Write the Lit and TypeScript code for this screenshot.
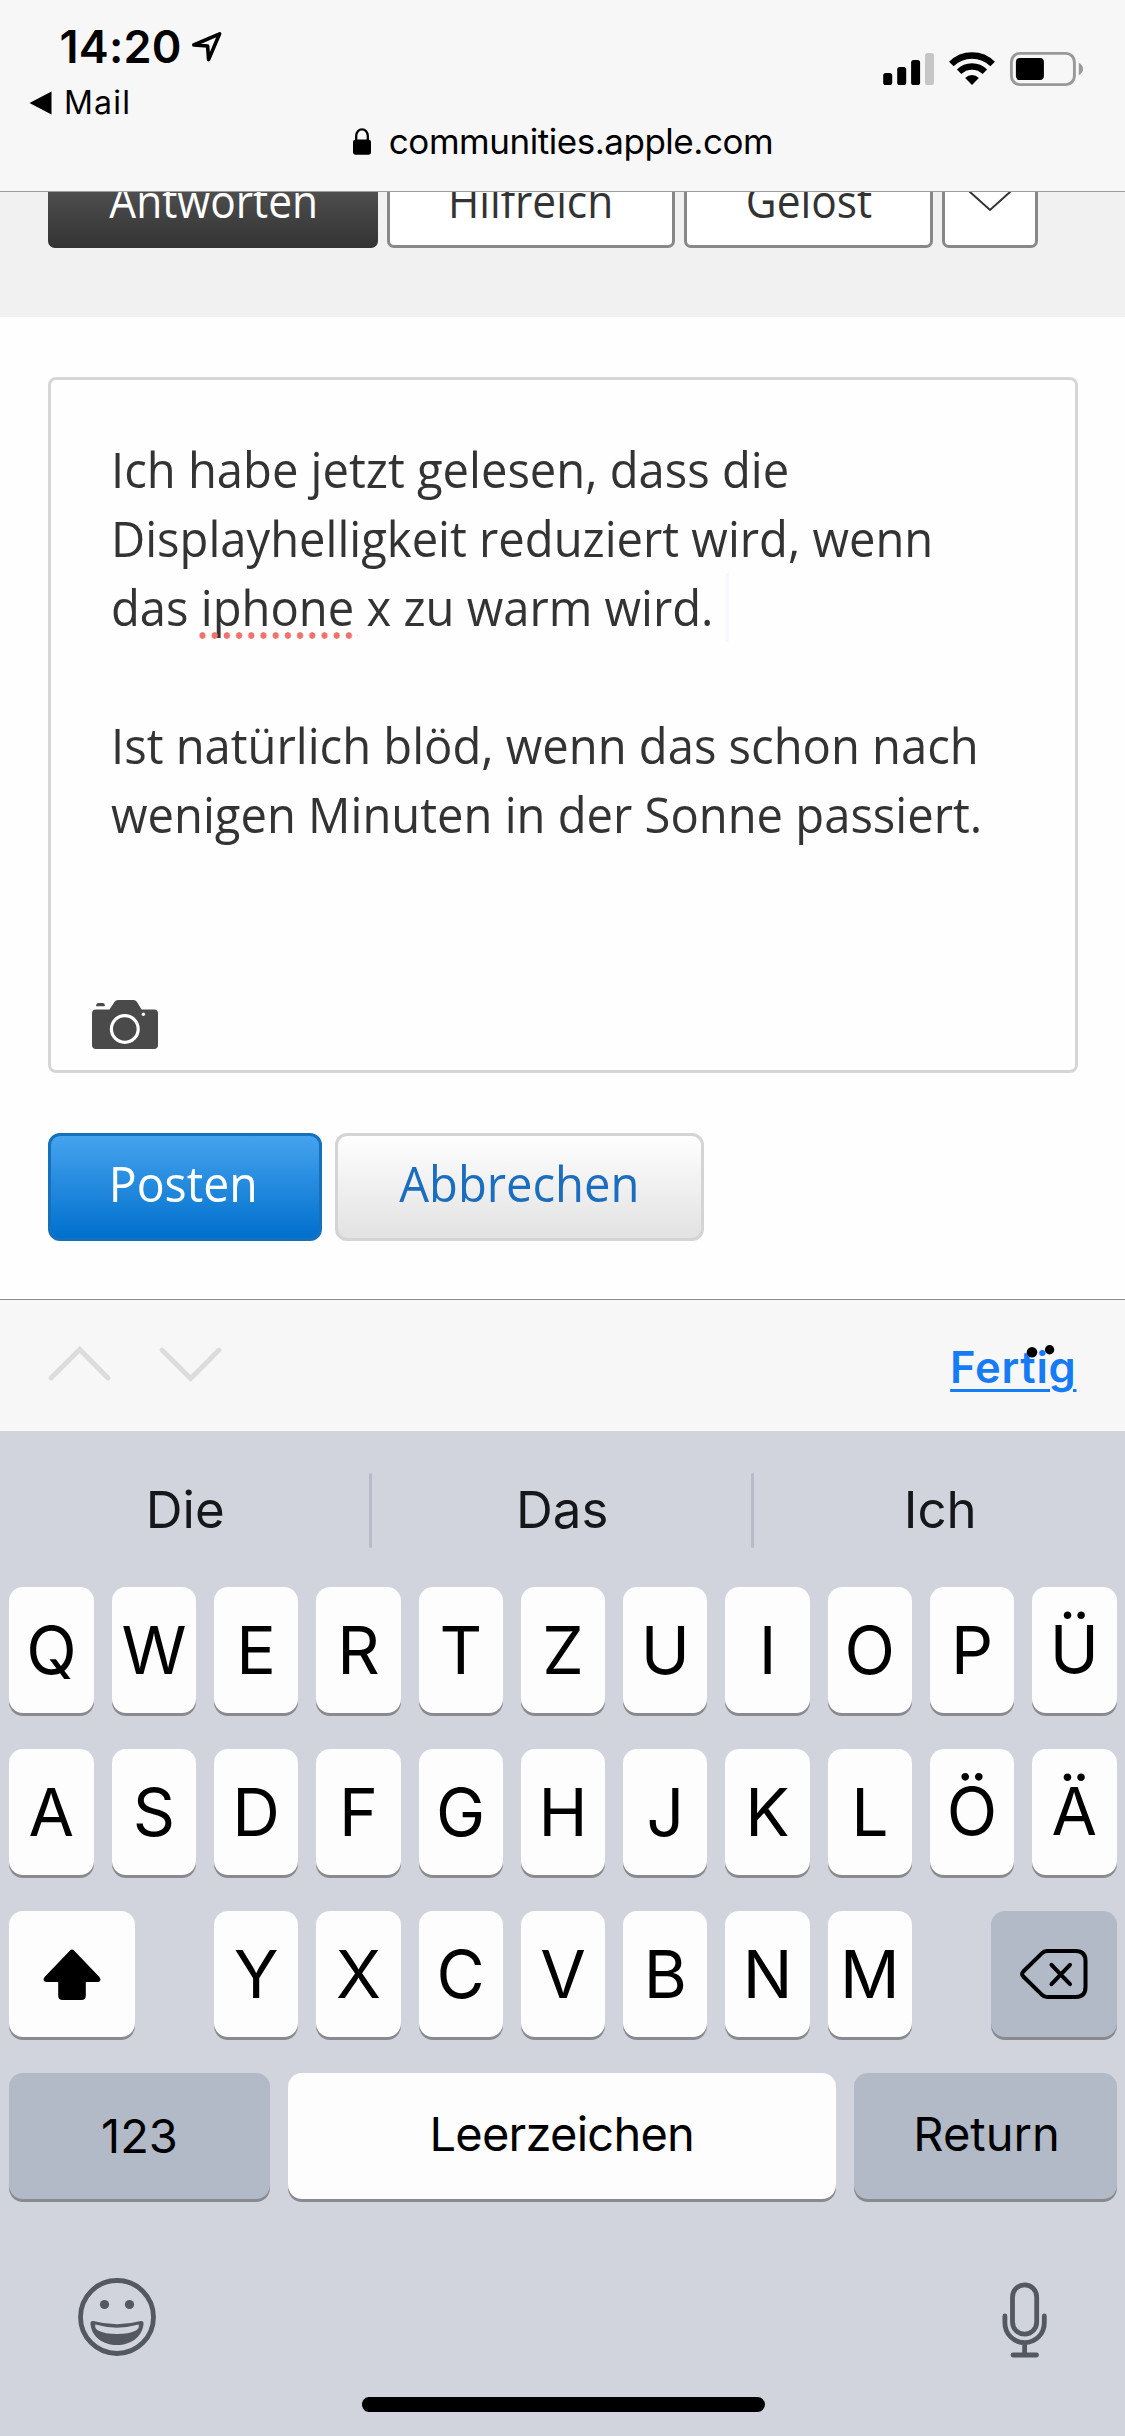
import { LitElement, html, css, nothing } from "lit";
import { customElement, property } from "lit/decorators.js";

/* Humanist sans label, slightly narrowed around a chosen origin. */
@customElement("page-label")
export class PageLabel extends LitElement {
  static styles = css`
    :host {
      display: inline-block;
      font-family: "Open Sans", "Noto Sans", sans-serif;
      white-space: nowrap;
      transform: scaleX(0.943);
    }
  `;
  render() {
    return html`<slot></slot>`;
  }
}

@customElement("status-header")
export class StatusHeader extends LitElement {
  static styles = css`
    :host {
      display: flex;
      flex-direction: column;
      box-sizing: border-box;
      height: 192px;
      background: #f7f7f7;
      border-bottom: 1px solid #9c9c9c;
      color: #000;
      font-family: Inter, sans-serif;
    }
    svg {
      display: block;
      flex: none;
    }
    .status {
      display: flex;
      justify-content: space-between;
      height: 119px;
    }
    .left {
      padding: 20px 0 0 28.5px;
    }
    .time {
      display: flex;
      align-items: flex-start;
      padding-left: 31px;
      height: 54px;
      line-height: 54px;
      font-size: 45px;
      font-weight: 590;
      letter-spacing: 0.2px;
    }
    .time svg {
      margin: 11px 0 0 9.5px;
    }
    .back {
      display: flex;
      align-items: center;
      gap: 12.5px;
      padding-top: 12px;
      height: 33px;
      line-height: 33px;
      font-size: 32px;
      letter-spacing: 1.2px;
    }
    .right {
      display: flex;
      padding: 51px 41px 0 0;
    }
    .wifi {
      margin: 0 14px 0 14px;
    }
    .url {
      display: flex;
      justify-content: center;
      align-items: center;
      gap: 18px;
      height: 44px;
      padding-left: 1px;
      line-height: 44px;
      font-size: 35px;
      letter-spacing: -0.47px;
    }
  `;
  render() {
    return html`
      <div class="status">
        <div class="left">
          <div class="time">
            <span>14:20</span>
            <svg width="32" height="32" viewBox="0 0 32 32">
              <path d="M2.8 14 28.6 2.8 17.6 28.6 16.6 15Z" fill="none" stroke="#000" stroke-width="3.6" stroke-linejoin="round" />
            </svg>
          </div>
          <div class="back">
            <svg width="23" height="24" viewBox="0 0 23 24"><path d="M.5 12 22.5.6V23.4Z" /></svg>
            <span>Mail</span>
          </div>
        </div>
        <div class="right">
          <svg width="52" height="35" viewBox="0 0 52 35">
            <rect x="0.2" y="22" width="9" height="12" rx="2.6" />
            <rect x="14.2" y="16" width="9" height="18" rx="2.6" />
            <rect x="28.1" y="9" width="9" height="25" rx="2.6" />
            <rect x="42" y="2" width="9" height="32" rx="2.6" fill="#c6c6c6" />
          </svg>
          <svg class="wifi" width="46" height="35" viewBox="0 0 46 35">
            <g fill="none" stroke="#000" stroke-width="6.4">
              <path d="M2.35 13.05A29.2 29.2 0 0 1 43.65 13.05" />
              <path d="M10.15 20.85A18.2 18.2 0 0 1 35.85 20.85" />
            </g>
            <path d="M23 33.9 16.2 26.9Q19 24 23 24T29.8 26.9Z" />
          </svg>
          <svg width="75" height="36" viewBox="0 0 75 36">
            <rect x="2.4" y="2.4" width="63" height="31.2" rx="8.5" fill="none" stroke="#999" stroke-width="2.9" />
            <rect x="6.9" y="7" width="28" height="22" rx="4" />
            <path d="M69.8 11.8Q74 14 74 18T69.8 24.2Z" fill="#999" />
          </svg>
        </div>
      </div>
      <div class="url">
        <svg width="18" height="27" viewBox="0 0 18 27">
          <rect y="11.5" width="18" height="15.3" rx="2.8" />
          <path d="M3.2 13V7.8A5.8 6.4 0 0 1 14.8 7.8V13" fill="none" stroke="#000" stroke-width="2.3" />
        </svg>
        <span>communities.apple.com</span>
      </div>
    `;
  }
}

@customElement("reply-page")
export class ReplyPage extends LitElement {
  static styles = css`
    :host {
      display: block;
      height: 1107px;
      background: #fefefe;
      color: #333;
    }
    svg {
      display: block;
    }
    .actions {
      display: flex;
      align-items: flex-end;
      gap: 9px;
      box-sizing: border-box;
      height: 125px;
      padding: 0 48px 69px;
      overflow: hidden;
      background: #f1f1f1;
    }
    .action {
      display: flex;
      flex: none;
      justify-content: center;
      box-sizing: border-box;
      height: 108px;
      border: 3px solid #888;
      border-radius: 7px;
      background: #fff;
      font-size: 45px;
      line-height: 115px;
    }
    .action page-label {
      margin-top: -0.5px;
    }
    .reply {
      width: 330px;
      border: 0;
      padding: 3px 0 0 1px;
      background: linear-gradient(#666, #333);
      color: #fff;
    }
    .helpful {
      width: 288px;
    }
    .solved {
      width: 249px;
    }
    .more {
      width: 96px;
      align-items: flex-end;
      padding-bottom: 33px;
    }
    .editor {
      display: flex;
      flex-direction: column;
      justify-content: space-between;
      box-sizing: border-box;
      height: 696px;
      margin: 60px 47px 0 48px;
      padding: 55px 0 21px;
      border: 3px solid #d6d6d6;
      border-radius: 8px;
    }
    .editor page-label {
      margin-left: 60px;
      font-size: 50px;
      line-height: 69px;
      transform-origin: left;
    }
    .misspelt {
      display: inline-block;
      position: relative;
    }
    .misspelt::after {
      content: "";
      position: absolute;
      left: -2px;
      top: 59px;
      width: 168.5px;
      height: 7px;
      background: radial-gradient(ellipse 3.7px 3.5px at 4px 3.5px, #f0736b 85%, #f0736b00 100%) 0 0 / 12.95px 7px;
    }
    .caret {
      display: inline-block;
      width: 3px;
      height: 69px;
      vertical-align: top;
      background: #f7f8fe;
    }
    .camera {
      margin-left: 41px;
    }
    .buttons {
      display: flex;
      gap: 13px;
      padding: 60px 48px 0;
    }
    .button {
      display: flex;
      justify-content: center;
      box-sizing: border-box;
      height: 108px;
      border: 3px solid #d4d4d4;
      border-radius: 12px;
      background: linear-gradient(#fefefe, #e2e2e2);
      color: #1b6dbe;
      font-size: 50px;
      line-height: 95px;
    }
    .post {
      width: 274px;
      padding-right: 3px;
      border-color: #1671bc;
      background: linear-gradient(#45a3ee, #0070cd);
      color: #fff;
    }
    .post page-label {
      transform: scaleX(0.928);
    }
    .cancel {
      width: 369px;
      padding-right: 1px;
    }
  `;
  render() {
    return html`
      <div class="actions">
        <div class="action reply"><page-label>Antworten</page-label></div>
        <div class="action helpful"><page-label>Hilfreich</page-label></div>
        <div class="action solved"><page-label>Gelöst</page-label></div>
        <div class="action more">
          <svg width="52" height="26" viewBox="0 0 52 26">
            <path d="M1 1.5 26 24 51 1.5" fill="none" stroke="#333" stroke-width="2" />
          </svg>
        </div>
      </div>
      <div class="editor">
        <page-label>
          Ich habe jetzt gelesen, dass die<br />
          Displayhelligkeit reduziert wird, wenn<br />
          das <span class="misspelt">iphone</span> x zu warm wird. <i class="caret"></i><br />
          <br />
          Ist natürlich blöd, wenn das schon nach<br />
          wenigen Minuten in der Sonne passiert.
        </page-label>
        <svg class="camera" width="66" height="49" viewBox="0 0 66 49">
          <path
            d="M4 9.5H17.5L22.6 1.8Q23.8 0 26 0H41.5Q43.6 0 44.8 1.8L49.6 9.5H62Q66 9.5 66 13.5V45Q66 49 62 49H4Q0 49 0 45V13.5Q0 9.5 4 9.5Z"
            fill="#4a4a4a"
          />
          <path d="M4.2 6.3V5.2Q4.2 3 6.5 3H10.5Q12.8 3 12.8 5.2V6.3Z" fill="#4a4a4a" />
          <circle cx="32.8" cy="29" r="13.4" fill="none" stroke="#fff" stroke-width="3.2" />
          <circle cx="51.4" cy="14.3" r="1.7" fill="#fff" />
        </svg>
      </div>
      <div class="buttons">
        <div class="button post"><page-label>Posten</page-label></div>
        <div class="button cancel"><page-label>Abbrechen</page-label></div>
      </div>
    `;
  }
}

@customElement("keyboard-key")
export class KeyboardKey extends LitElement {
  @property() label = "";
  static styles = css`
    :host {
      display: flex;
      align-items: center;
      justify-content: center;
      height: 126px;
      border-radius: 14px;
      background: #fdfdfe;
      box-shadow: 0 3px 0 #898a8f;
      color: #000;
      font: 66px/126px Inter, sans-serif;
    }
  `;
  render() {
    return html`${this.label || nothing}<slot></slot>`;
  }
}

@customElement("soft-keyboard")
export class SoftKeyboard extends LitElement {
  static styles = css`
    :host {
      display: flex;
      flex-direction: column;
      height: 1137px;
      background: #d1d4dd;
      font-family: Inter, sans-serif;
    }
    svg {
      display: block;
      flex: none;
    }
    .accessory {
      display: flex;
      align-items: flex-start;
      justify-content: space-between;
      box-sizing: border-box;
      height: 132px;
      border-top: 1px solid #8e8d92;
      padding: 0 48.5px 0 47px;
      background: #f7f7f7;
    }
    .arrows {
      margin-top: 45px;
    }
    .done {
      position: relative;
      margin-top: 33px;
      color: #157cf5;
      font-size: 43.5px;
      font-weight: 600;
      line-height: 68px;
      letter-spacing: 0.75px;
      text-decoration: underline;
      text-decoration-thickness: 3px;
      text-underline-offset: 6px;
    }
    .specks {
      position: absolute;
      left: 76px;
      top: 10px;
    }
    .suggestions {
      display: grid;
      grid-template-columns: 369px 3px 379px 3px 371px;
      align-items: center;
      height: 75px;
      margin: 42px 0 39px;
      color: #16171a;
      font-size: 51px;
      line-height: 73px;
      text-align: center;
    }
    .suggestions span {
      height: 75px;
      padding-left: 1.5px;
    }
    .suggestions i {
      height: 75px;
      border-radius: 2px;
      background: #b9bcc7;
    }
    .row {
      display: grid;
      grid-template-columns: repeat(11, 1fr);
      column-gap: 18px;
      height: 126px;
      margin-bottom: 36px;
      padding: 0 8.5px 0 9.5px;
    }
    .row > :first-child {
      margin-left: -0.5px;
    }
    .umlaut {
      line-height: 124px;
      align-items: flex-start;
    }
    .shift {
      grid-column: span 2;
      width: 126px;
    }
    .delete {
      grid-column: span 2;
      width: 126px;
      justify-self: end;
    }
    .dark {
      background: #b2b9c7;
    }
    .bottom {
      grid-template-columns: 260.5px 547.5px 1fr;
    }
    .bottom keyboard-key {
      font-size: 47px;
    }
    .bottom .word {
      line-height: 122px;
      align-items: flex-start;
    }
    .space {
      letter-spacing: -0.75px;
    }
    .return {
      text-indent: 3px;
    }
    .tools {
      display: flex;
      justify-content: space-between;
      align-items: flex-start;
      height: 79px;
      padding: 43px 77px 0 78px;
    }
    .mic {
      margin-top: 4px;
    }
    .home {
      width: 403px;
      height: 15px;
      margin: 40px auto 0;
      border-left: 1px solid #d1d4dd;
      border-radius: 8px;
      background: #000;
    }
  `;
  private keys(text: string) {
    return [...text].map(
      (c) => html`<keyboard-key class=${"ÜÖÄ".includes(c) ? "umlaut" : ""} label=${c}></keyboard-key>`
    );
  }
  render() {
    return html`
      <div class="accessory">
        <svg class="arrows" width="176" height="38" viewBox="0 0 176 38">
          <path d="M4 33 32.7 4.5 61 33M115 5 143.7 33.5 172 5" fill="none" stroke="#dcdcdc" stroke-width="4.8" stroke-linecap="round" />
        </svg>
        <div class="done">
          Fertig
          <svg class="specks" width="30" height="16" viewBox="0 0 30 16">
            <circle cx="6" cy="9.3" r="5.3" />
            <circle cx="23.6" cy="6.7" r="4.7" />
          </svg>
        </div>
      </div>
      <div class="suggestions"><span>Die</span><i></i><span>Das</span><i></i><span>Ich</span></div>
      <div class="row">${this.keys("QWERTZUIOPÜ")}</div>
      <div class="row">${this.keys("ASDFGHJKLÖÄ")}</div>
      <div class="row">
        <keyboard-key class="shift">
          <svg width="58" height="51" viewBox="0 0 58 51">
            <path
              d="M29 .5Q30 .5 31 1.6L56.4 28Q58 30 57.3 31.6T54.6 33H42.8V46.5Q42.8 51 38.3 51H19.7Q15.2 51 15.2 46.5V33H3.4Q1.4 33 .7 31.6T1.6 28L27 1.6Q28 .5 29 .5Z"
            />
          </svg>
        </keyboard-key>
        ${this.keys("YXCVBNM")}
        <keyboard-key class="delete dark">
          <svg width="70" height="52" viewBox="0 0 70 52">
            <path
              d="M28 3H56.5Q66.5 3 66.5 13V39Q66.5 49 56.5 49H28Q25 49 22.8 46.6L4.3 28.5Q2 26 4.3 23.5L22.8 5.4Q25 3 28 3Z"
              fill="none"
              stroke="#000"
              stroke-width="4"
            />
            <path d="M32.5 16.8 51 36.2M51 16.8 32.5 36.2" fill="none" stroke="#000" stroke-width="4" stroke-linecap="round" />
          </svg>
        </keyboard-key>
      </div>
      <div class="row bottom">
        <keyboard-key class="dark" label="123"></keyboard-key>
        <keyboard-key class="word space" label="Leerzeichen"></keyboard-key>
        <keyboard-key class="word dark return" label="Return"></keyboard-key>
      </div>
      <div class="tools">
        <svg width="78" height="78" viewBox="0 0 78 78">
          <circle cx="39" cy="39" r="36.5" fill="none" stroke="#535861" stroke-width="4.8" />
          <circle cx="26.5" cy="26.5" r="4.6" fill="#535861" />
          <circle cx="51.5" cy="26.5" r="4.6" fill="#535861" />
          <path
            fill="#535861"
            fill-rule="evenodd"
            d="M15.3 43Q39 49.5 62.7 43Q66 42.5 65.5 46.5C64 59 53 67 39 67S14 59 12.5 46.5Q12 42.500 15.3 43ZM17.3 46.6Q16.5 50.5 20 52.5Q27 56 39 56T58 52.5Q61.5 50.5 60.7 46.6Q39 52.8 17.3 46.6Z"
          />
        </svg>
        <svg class="mic" width="46" height="76" viewBox="0 0 46 76">
          <g fill="none" stroke="#535861" stroke-width="4.8" stroke-linecap="round">
            <rect x="10.5" y="2.9" width="24.2" height="49.2" rx="12" />
            <path d="M2.9 34V41A19.7 19.7 0 0 0 42.3 41V34M22.6 61V73M11 73H34.5" />
          </g>
        </svg>
      </div>
      <div class="home"></div>
    `;
  }
}

@customElement("app-root")
export class AppRoot extends LitElement {
  static styles = css`
    :host {
      display: block;
      width: 1125px;
      height: 2436px;
      overflow: hidden;
    }
  `;
  render() {
    return html`
      <status-header></status-header>
      <reply-page></reply-page>
      <soft-keyboard></soft-keyboard>
    `;
  }
}
